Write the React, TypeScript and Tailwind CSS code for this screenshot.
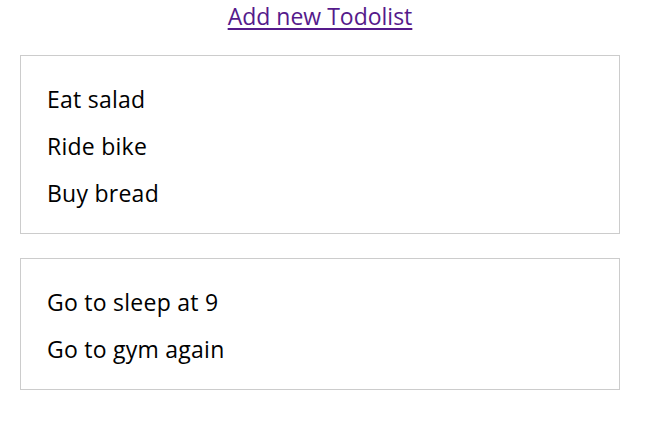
import React from "react";

const lists = [
    ["Eat salad", "Ride bike", "Buy bread"],
    ["Go to sleep at 9", "Go to gym again"],
];

export default function App() {
    return (
        <div className="w-[645px] h-[435px] bg-white text-black" style={{fontFamily: '"Open Sans", "Noto Sans", sans-serif'}}>
            <div className="flex justify-center h-[55px] w-[640px]">
                <a href="#" className="text-[23px] leading-[32px] text-[#551a8b] underline underline-offset-[3px]">Add new Todolist</a>
            </div>
            <div className="flex flex-col gap-[24px] pl-[20px] w-[620px]">
                {lists.map((items, i) => (
                    <div key={i} className="border border-[#cccccc] pt-[20px] pb-[16px] pl-[26px]">
                        {items.map((t) => (
                            <div key={t} className="h-[47px] flex items-center text-[23px] tracking-[0.25px]">{t}</div>
                        ))}
                    </div>
                ))}
            </div>
        </div>
    );
}
